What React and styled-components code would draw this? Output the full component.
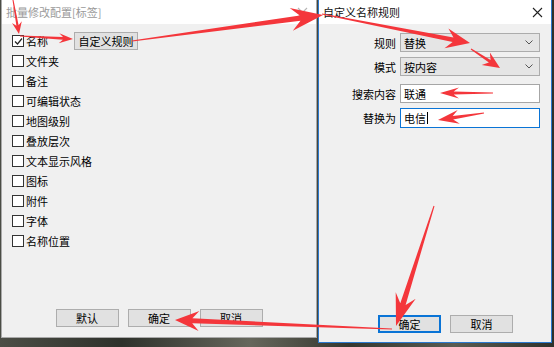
import React from 'react';
import styled, { createGlobalStyle } from 'styled-components';

const GlobalStyle = createGlobalStyle`
  html, body { margin: 0; padding: 0; }
  body {
    font-family: "Noto Sans CJK SC", "Microsoft YaHei", sans-serif;
    font-size: 11px;
  }
`;

const Desktop = styled.div`
  position: relative;
  width: 554px;
  height: 347px;
  overflow: hidden;
  box-sizing: border-box;
  display: flex;
  align-items: flex-start;
  padding-left: 1px;
  background: linear-gradient(90deg, #4b4d45 0%, #2e312b 22%, #66675c 45%, #35372f 63%, #5a5b51 82%, #2f312b 100%);
`;

const Window = styled.div`
  box-sizing: border-box;
  width: ${p => p.$width}px;
  height: ${p => p.$height}px;
  margin-left: ${p => p.$gap || 0}px;
  display: flex;
  flex-direction: column;
  background: #f0f0f0;
  border: 1px solid ${p => (p.$active ? '#2b79cf' : '#a9a9a9')};
  border-top: 0;
`;

const TitleBar = styled.div`
  height: 24px;
  flex: none;
  display: flex;
  align-items: center;
  justify-content: space-between;
  padding: 0 8px 0 4px;
  background: #fff;
  color: ${p => (p.$active ? '#111' : '#9a9a9a')};
  font-size: 11px;
`;

const CloseIcon = ({ color }) => (
  <svg width="11" height="11" viewBox="0 0 11 11">
    <path d="M1 1 L10 10 M10 1 L1 10" stroke={color} strokeWidth="1.1" fill="none" />
  </svg>
);

const CheckList = styled.div`
  display: flex;
  flex-direction: column;
  padding: 7px 0 0 10px;
`;

const CheckRow = styled.label`
  display: flex;
  align-items: center;
  height: 20px;
  gap: 2px;
  color: #000;
  line-height: 1;
`;

const Box = styled.span`
  box-sizing: border-box;
  width: 12px;
  height: 12px;
  border: 1px solid #333;
  background: #fff;
  display: flex;
  align-items: center;
  justify-content: center;
`;

const Button = styled.div`
  box-sizing: border-box;
  width: ${p => p.$width || 63}px;
  height: 18px;
  display: flex;
  align-items: center;
  justify-content: center;
  background: #e1e1e1;
  border: 1px solid ${p => (p.$default ? '#0a74d6' : '#adadad')};
  box-shadow: ${p => (p.$default ? 'inset 0 0 0 1px #0a74d6' : 'none')};
  color: #000;
  font-size: 11px;
  margin-left: ${p => p.$offset || 0}px;
`;

const Footer = styled.div`
  margin-top: auto;
  display: flex;
  justify-content: ${p => p.$align || 'center'};
  gap: 9px;
  padding: 0 ${p => p.$right || 0}px ${p => p.$bottom || 10}px 0;
`;

const Form = styled.div`
  display: flex;
  flex-direction: column;
  gap: 5px;
  padding: 9px 11px 0 0;
`;

const FieldRow = styled.div`
  display: grid;
  grid-template-columns: 1fr 140px;
  column-gap: 4px;
  align-items: center;
  margin-top: ${p => p.$extra || 0}px;
`;

const FieldLabel = styled.span`
  text-align: right;
  color: #000;
`;

const Combo = styled.div`
  box-sizing: border-box;
  height: 19px;
  display: flex;
  align-items: center;
  justify-content: space-between;
  padding: 0 6px 0 3px;
  background: #e5e5e5;
  border: 1px solid #acacac;
`;

const TextBox = styled.div`
  box-sizing: border-box;
  height: ${p => p.$h || 19}px;
  display: flex;
  align-items: center;
  padding-left: 3px;
  background: #fff;
  border: 1px solid ${p => (p.$focused ? '#0a74d6' : '#a6a6a6')};
`;

const Caret = styled.span`
  width: 1px;
  height: 12px;
  margin-left: 1px;
  background: #000;
`;

const Overlay = styled.svg`
  position: absolute;
  left: 0;
  top: 0;
  pointer-events: none;
`;

const Chevron = () => (
  <svg width="8" height="5" viewBox="0 0 8 5">
    <path d="M0.5 0.5 L4 4 L7.5 0.5" stroke="#555" strokeWidth="1" fill="none" />
  </svg>
);

const Tick = () => (
  <svg width="9" height="9" viewBox="0 0 9 9">
    <path d="M1 4.5 L3.5 7 L8 1.5" stroke="#222" strokeWidth="1.2" fill="none" />
  </svg>
);

const fields = ['名称', '文件夹', '备注', '可编辑状态', '地图级别', '叠放层次', '文本显示风格', '图标', '附件', '字体', '名称位置'];

// tail, tip, head length, head half-width, shaft width near head
const arrows = [
  [[13, 0], [19, 34], 12, 5, 2.2],
  [[20, 36], [73, 39], 14, 5, 2.6],
  [[132, 41], [323, 15], 32, 11.5, 5.5],
  [[322, 14], [470, 43], 24, 10, 4.5],
  [[471, 49], [500, 68], 17, 7.5, 3],
  [[493, 93], [440, 93], 19, 5.5, 3],
  [[484, 113], [438, 120], 21, 7, 3.5],
  [[434, 206], [396, 326], 32, 10.5, 5.5],
  [[392, 329], [175, 320], 24, 10, 5],
];

function arrowPoints([x0, y0], [x1, y1], head, halfW, neck) {
  const len = Math.hypot(x1 - x0, y1 - y0);
  const ux = (x1 - x0) / len;
  const uy = (y1 - y0) / len;
  const nx = -uy;
  const ny = ux;
  const bx = x1 - ux * head;
  const by = y1 - uy * head;
  const kx = x1 - ux * head * 0.72;
  const ky = y1 - uy * head * 0.72;
  const pts = [
    [x0 + nx * 0.5, y0 + ny * 0.5],
    [kx + nx * neck / 2, ky + ny * neck / 2],
    [bx + nx * halfW, by + ny * halfW],
    [x1, y1],
    [bx - nx * halfW, by - ny * halfW],
    [kx - nx * neck / 2, ky - ny * neck / 2],
    [x0 - nx * 0.5, y0 - ny * 0.5],
  ];
  return pts.map(p => p.map(v => v.toFixed(1)).join(',')).join(' ');
}

export default function App() {
  return (
    <Desktop>
      <GlobalStyle />
      <Window $width={316} $height={338}>
        <TitleBar>
          <span>批量修改配置[标签]</span>
          <CloseIcon color="#b5b5b5" />
        </TitleBar>
        <CheckList>
          {fields.map((f, i) => (
            <CheckRow key={f}>
              <Box>{i === 0 && <Tick />}</Box>
              <span>{f}</span>
              {i === 0 && <Button $width={64} $offset={24}>自定义规则</Button>}
            </CheckRow>
          ))}
        </CheckList>
        <Footer>
          <Button>默认</Button>
          <Button>确定</Button>
          <Button>取消</Button>
        </Footer>
      </Window>

      <Window $active $width={234} $height={343} $gap={1}>
        <TitleBar $active>
          <span>自定义名称规则</span>
          <CloseIcon color="#222" />
        </TitleBar>
        <Form>
          <FieldRow>
            <FieldLabel>规则</FieldLabel>
            <Combo><span>替换</span><Chevron /></Combo>
          </FieldRow>
          <FieldRow>
            <FieldLabel>模式</FieldLabel>
            <Combo><span>按内容</span><Chevron /></Combo>
          </FieldRow>
          <FieldRow $extra={3}>
            <FieldLabel>搜索内容</FieldLabel>
            <TextBox><span>联通</span></TextBox>
          </FieldRow>
          <FieldRow>
            <FieldLabel>替换为</FieldLabel>
            <TextBox $focused $h={20}><span>电信</span><Caret /></TextBox>
          </FieldRow>
        </Form>
        <Footer $align="flex-end" $right={38} $bottom={9}>
          <Button $default>确定</Button>
          <Button>取消</Button>
        </Footer>
      </Window>

      <Overlay width="554" height="347" viewBox="0 0 554 347">
        {arrows.map(([a, b, h, w, n], i) => (
          <polygon key={i} points={arrowPoints(a, b, h, w, n)} fill="#f4363b" />
        ))}
      </Overlay>
    </Desktop>
  );
}
